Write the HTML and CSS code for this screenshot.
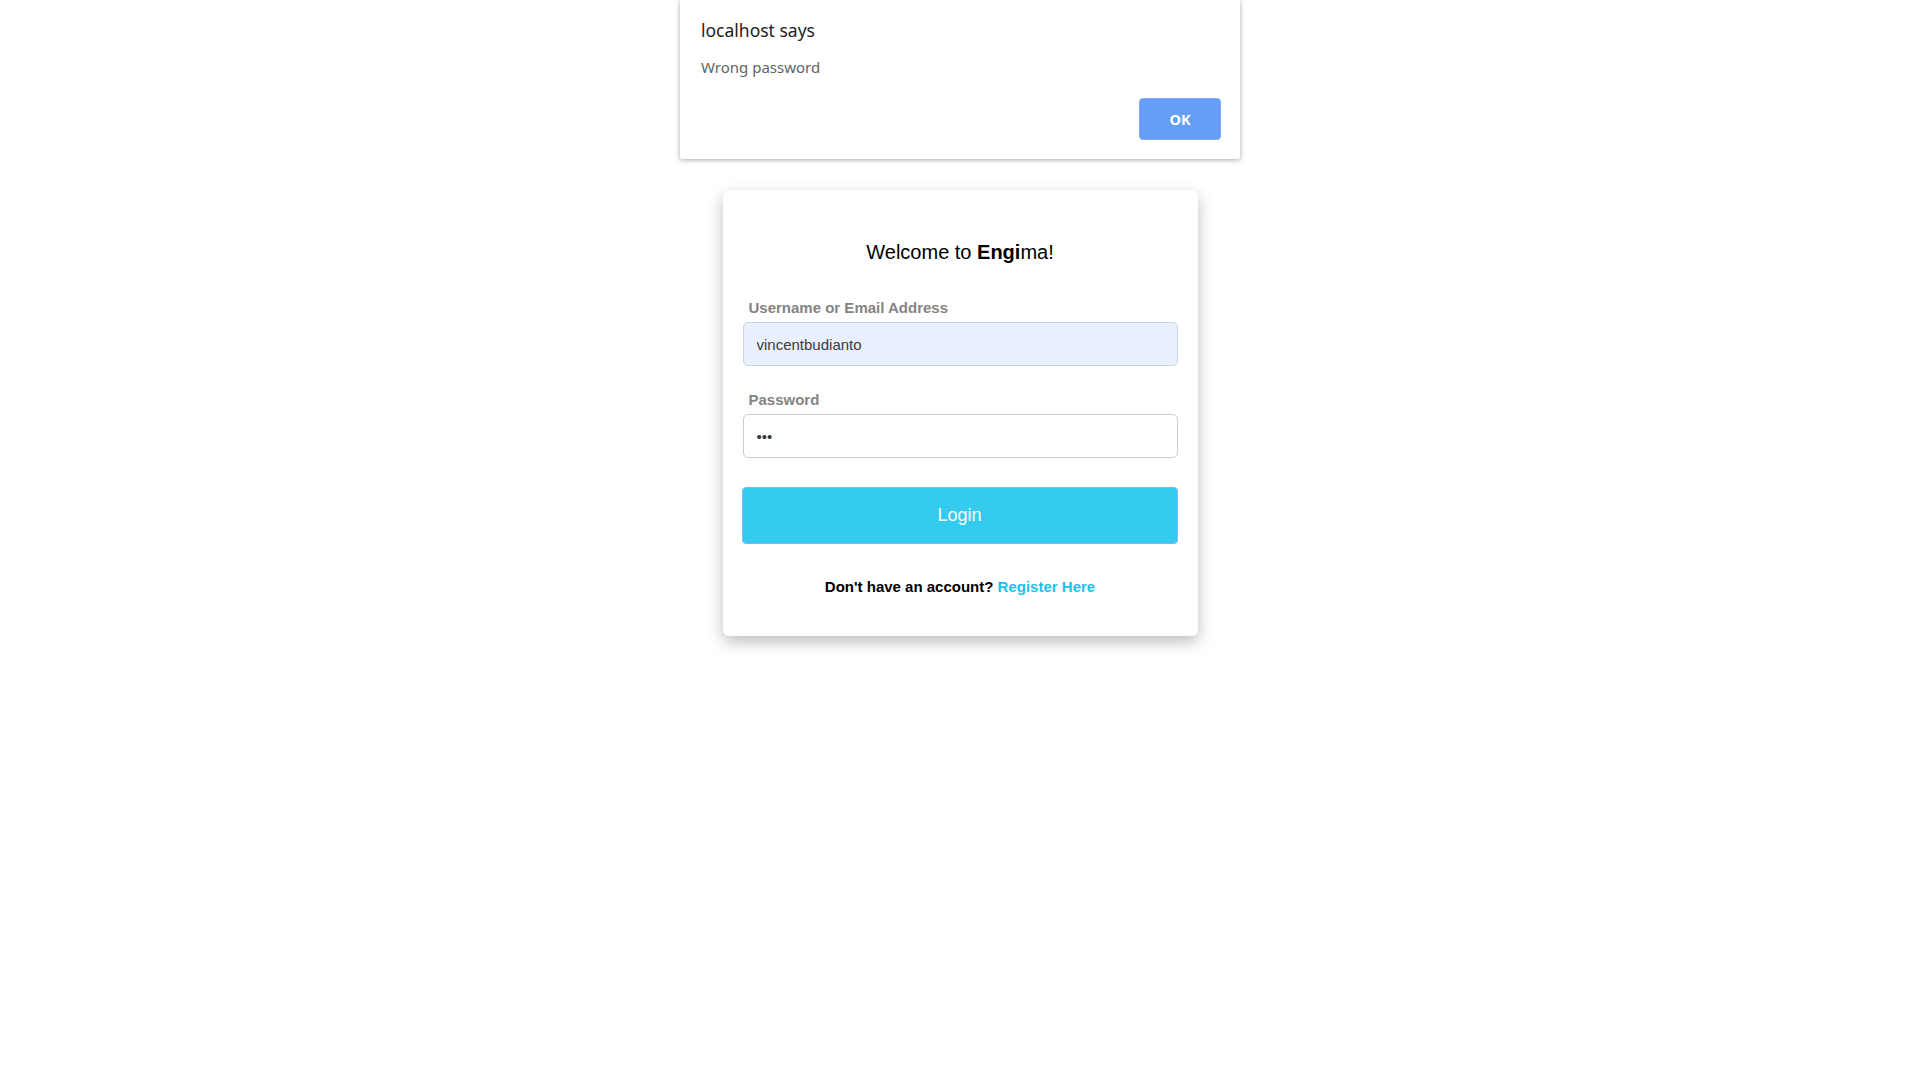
FILE: index.html
```html
<!DOCTYPE html>
<html lang="en">
<head>
<meta charset="utf-8">
<title>Engima - Login</title>
<link rel="stylesheet" href="styles.css">
</head>
<body>
  <div class="alert" role="alertdialog">
    <div class="alert-title">localhost says</div>
    <div class="alert-message">Wrong password</div>
    <div class="alert-actions">
      <button class="alert-ok" type="button">OK</button>
    </div>
  </div>

  <main class="page">
    <form class="card" onsubmit="return false;">
      <h1 class="card-title">Welcome to <b>Engi</b>ma!</h1>

      <label class="field-label" for="user">Username or Email Address</label>
      <input class="field-input autofilled" id="user" type="text" value="vincentbudianto">

      <label class="field-label second" for="pass">Password</label>
      <input class="field-input" id="pass" type="password" value="abc">

      <button class="login-btn" type="submit">Login</button>

      <p class="register">Don't have an account? <a class="register-link" href="#">Register Here</a></p>
    </form>
  </main>
</body>
</html>
```
FILE: styles.css
```css
html, body {
  margin: 0;
  padding: 0;
  background: #ffffff;
}

body {
  font-family: "Liberation Sans", Arial, sans-serif;
  color: #000;
  min-height: 1080px;
}

/* Browser alert overlay */
.alert {
  position: absolute;
  top: 0;
  left: 50%;
  margin-left: -280px;
  width: 560px;
  height: 159px;
  box-sizing: border-box;
  background: #fff;
  padding: 20px 19px 19px 21px;
  display: flex;
  flex-direction: column;
  box-shadow: 0 1px 5px rgba(0, 0, 0, 0.35);
  border-radius: 0 0 2px 2px;
  font-family: "Noto Sans", "Open Sans", sans-serif;
  z-index: 10;
}

.alert-title {
  font-size: 17.5px;
  line-height: 20px;
  color: #202124;
}

.alert-message {
  margin-top: 18px;
  font-size: 15px;
  line-height: 18px;
  color: #5f6368;
}

.alert-actions {
  margin-top: auto;
  display: flex;
  justify-content: flex-end;
}

.alert-ok {
  width: 82px;
  height: 42px;
  border: 1px solid #7eaaf5;
  border-radius: 4px;
  background: #669df6;
  color: #fff;
  font-family: "Noto Sans", "Open Sans", sans-serif;
  font-weight: 700;
  font-size: 14.5px;
  padding: 0;
}

/* Page */
.page {
  display: flex;
  justify-content: center;
  padding-top: 190px;
  padding-bottom: 60px;
}

.card {
  width: 475px;
  box-sizing: border-box;
  padding: 50px 20px 40px 20px;
  background: #fff;
  border-radius: 6px;
  box-shadow: 0 6px 16px rgba(0, 0, 0, 0.26);
  display: flex;
  flex-direction: column;
}

.card-title {
  margin: 0;
  font-size: 20px;
  line-height: 24px;
  font-weight: 400;
  text-align: center;
  color: #000;
}

.card-title b {
  font-weight: 700;
}

.field-label {
  margin-top: 35px;
  padding-left: 6px;
  font-size: 15px;
  line-height: 18px;
  font-weight: 700;
  color: #848484;
}

.field-label.second {
  margin-top: 25px;
}

.field-input {
  margin-top: 5px;
  height: 44px;
  box-sizing: border-box;
  border: 1px solid #cfcfcf;
  border-radius: 5px;
  padding: 0 13px;
  font-family: "Liberation Sans", Arial, sans-serif;
  font-size: 15px;
  color: #3a3a3a;
  background: #fff;
  outline: none;
}

.field-input.autofilled {
  background: #e8f0fe;
  border-color: #cdd3dc;
}

.login-btn {
  margin-top: 29px;
  margin-left: -1px;
  height: 57px;
  border: 1px solid #88b3f7;
  border-radius: 4px;
  background: #33ccee;
  color: #fff;
  font-family: "Liberation Sans", Arial, sans-serif;
  font-size: 18px;
  padding: 0;
}

.register {
  margin: 34px 0 0 0;
  font-size: 15px;
  line-height: 18px;
  font-weight: 700;
  text-align: center;
  color: #000;
}

.register-link {
  color: #1cbfef;
  text-decoration: none;
}
```
